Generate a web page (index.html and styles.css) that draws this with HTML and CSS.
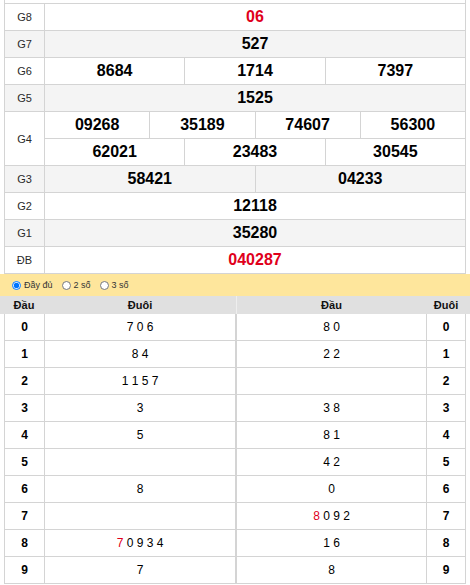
FILE: index.html
```html
<!DOCTYPE html>
<html lang="vi">
<head>
<meta charset="utf-8">
<title>Kết quả xổ số</title>
<link rel="stylesheet" href="styles.css">
</head>
<body>
<div class="page">
  <div class="prizes">
    <div class="cut"></div>

    <div class="lbl">G8</div>
    <div class="num s12 red">06</div>

    <div class="lbl alt">G7</div>
    <div class="num s12 alt">527</div>

    <div class="lbl">G6</div>
    <div class="num s4">8684</div>
    <div class="num s4">1714</div>
    <div class="num s4">7397</div>

    <div class="lbl alt">G5</div>
    <div class="num s12 alt">1525</div>

    <div class="lbl g4">G4</div>
    <div class="num s3">09268</div>
    <div class="num s3">35189</div>
    <div class="num s3">74607</div>
    <div class="num s3">56300</div>
    <div class="num s4">62021</div>
    <div class="num s4">23483</div>
    <div class="num s4">30545</div>

    <div class="lbl alt">G3</div>
    <div class="num s6 alt">58421</div>
    <div class="num s6 alt">04233</div>

    <div class="lbl">G2</div>
    <div class="num s12">12118</div>

    <div class="lbl alt">G1</div>
    <div class="num s12 alt">35280</div>

    <div class="lbl">ĐB</div>
    <div class="num s12 red">040287</div>
  </div>

  <div class="options">
    <label class="opt"><input type="radio" name="mode" checked> Đầy đủ</label>
    <label class="opt"><input type="radio" name="mode"> 2 số</label>
    <label class="opt"><input type="radio" name="mode"> 3 số</label>
  </div>

  <div class="lo-head">
    <div class="h">Đầu</div>
    <div class="h">Đuôi</div>
    <div class="h split">Đầu</div>
    <div class="h">Đuôi</div>
  </div>

  <div class="lo-body">
    <div class="lo left">
      <div class="k">0</div><div class="v">7 0 6</div>
      <div class="k">1</div><div class="v">8 4</div>
      <div class="k">2</div><div class="v">1 1 5 7</div>
      <div class="k">3</div><div class="v">3</div>
      <div class="k">4</div><div class="v">5</div>
      <div class="k">5</div><div class="v"></div>
      <div class="k">6</div><div class="v">8</div>
      <div class="k">7</div><div class="v"></div>
      <div class="k">8</div><div class="v"><span class="red">7</span> 0 9 3 4</div>
      <div class="k">9</div><div class="v">7</div>
    </div>
    <div class="lo right">
      <div class="v">8 0</div><div class="k">0</div>
      <div class="v">2 2</div><div class="k">1</div>
      <div class="v"></div><div class="k">2</div>
      <div class="v">3 8</div><div class="k">3</div>
      <div class="v">8 1</div><div class="k">4</div>
      <div class="v">4 2</div><div class="k">5</div>
      <div class="v">0</div><div class="k">6</div>
      <div class="v"><span class="red">8</span> 0 9 2</div><div class="k">7</div>
      <div class="v">1 6</div><div class="k">8</div>
      <div class="v">8</div><div class="k">9</div>
    </div>
  </div>
</div>
</body>
</html>
```

FILE: styles.css
```css
* { box-sizing: border-box; }

html, body {
  margin: 0;
  padding: 0;
  background: #fff;
}

body {
  font-family: "Liberation Sans", Arial, sans-serif;
  color: #000;
}

.page {
  width: 470px;
}

.red { color: #e0001b; }

/* prize table */
.prizes {
  margin: 0 4px;
  width: 462px;
  display: grid;
  grid-template-columns: 40px repeat(12, 1fr);
  grid-template-rows: 4px repeat(10, 27px);
  border-left: 1px solid #d4d4d4;
}

.prizes > div {
  border-right: 1px solid #d4d4d4;
  border-bottom: 1px solid #d4d4d4;
  display: flex;
  align-items: center;
  justify-content: center;
}

.cut { grid-column: 1 / -1; }

.lbl {
  font-size: 11px;
  color: #2a2a2a;
}

.g4 { grid-row: span 2; }

.num {
  font-size: 16px;
  font-weight: bold;
}

.num.red { color: #e0001b; }

.s12 { grid-column: span 12; }
.s6 { grid-column: span 6; }
.s4 { grid-column: span 4; }
.s3 { grid-column: span 3; }

.alt { background: #f4f4f4; }

/* options bar */
.options {
  height: 22px;
  background: #fee69c;
  display: flex;
  align-items: center;
  padding-left: 12px;
  gap: 9px;
}

.opt {
  display: flex;
  align-items: center;
  font-size: 9px;
  color: #333;
}

.opt input {
  width: 9px;
  height: 9px;
  margin: 0 3px 0 0;
}

/* loto head */
.lo-head {
  height: 18px;
  background: #e0e0e0;
  padding: 0 4px;
  display: grid;
  grid-template-columns: 40px 192px 190px 40px;
  align-items: stretch;
}

.h {
  display: flex;
  align-items: center;
  justify-content: center;
  font-size: 11px;
  font-weight: bold;
  color: #111;
}

.h.split { border-left: 1px solid #eeeeee; }

/* loto body */
.lo-body {
  margin-left: 4px;
  display: grid;
  grid-template-columns: 232px 230px;
}

.lo {
  display: grid;
  grid-auto-rows: 27px;
  border-left: 1px solid #d4d4d4;
}

.lo.left { grid-template-columns: 40px 1fr; }
.lo.right { grid-template-columns: 1fr 39px; }

.lo > div {
  border-right: 1px solid #d4d4d4;
  border-bottom: 1px solid #d4d4d4;
  display: flex;
  align-items: center;
  justify-content: center;
  font-size: 12px;
  white-space: pre;
}

.lo .k { font-weight: bold; }
.lo .v { font-weight: normal; }
```
